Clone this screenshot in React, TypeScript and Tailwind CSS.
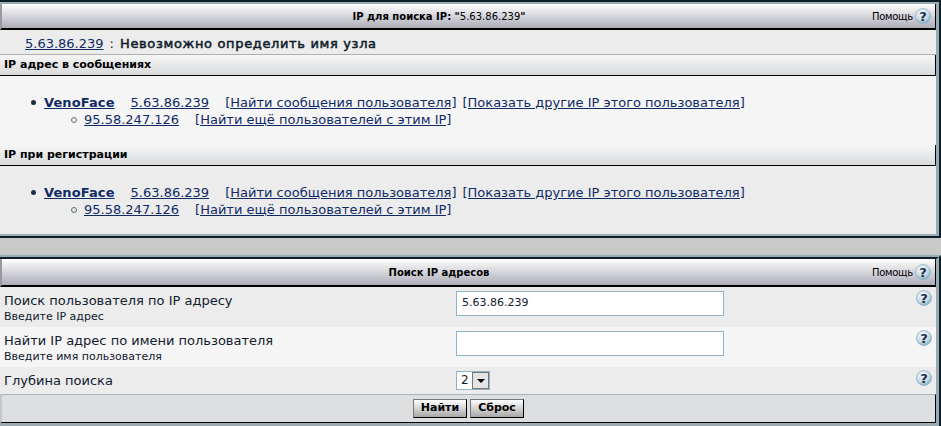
const HelpIcon = () => (
  <svg width="16" height="16" viewBox="0 0 16 16" className="shrink-0">
    <defs>
      <radialGradient id="hg" cx="0.4" cy="0.3" r="0.8">
        <stop offset="0" stopColor="#f4f8fa" />
        <stop offset="0.55" stopColor="#c9dde6" />
        <stop offset="1" stopColor="#6ea2b6" />
      </radialGradient>
    </defs>
    <circle cx="8" cy="8" r="7.5" fill="url(#hg)" stroke="#8fb3c2" strokeWidth="0.8" />
    <text x="8" y="13" textAnchor="middle" fontSize="13" fontWeight="700" fill="#1f2d48" fontFamily="'DejaVu Sans', sans-serif">?</text>
  </svg>
);

const Link = ({ children, bold }: { children: React.ReactNode; bold?: boolean }) => (
  <a className={`underline text-[#102a66] ${bold ? "font-bold tracking-[0.1px]" : ""}`}>{children}</a>
);

const TitleBar = ({ children, h }: { children: React.ReactNode; h: string }) => (
  <div className={`flex ${h} items-center border-b-2 border-l-2 border-r border-b-black border-l-[#9a9a9a] border-r-black bg-gradient-to-b from-[#ffffff] to-[#adadb9] text-[10px] text-black`}>
    <div className="ml-[4px] flex-1 text-center">{children}</div>
    <div className="flex items-center gap-[4px] pr-[4px]">
      <span className="w-[39px] tracking-[-0.3px]">Помощь</span>
      <HelpIcon />
    </div>
  </div>
);

const SectionHead = ({ children }: { children: React.ReactNode }) => (
  <div className="flex h-[21px] items-center border-b border-r border-b-black border-r-black bg-gradient-to-b from-[#f6f6f6] to-[#d8dadc] pl-[4px] pt-[1px] text-[11px] font-bold text-black">
    {children}
  </div>
);

const Entry = () => (
  <div className="text-[13px] leading-[17px]">
    <div className="flex items-center pl-[31px]">
      <span className="mr-[8px] h-[5px] w-[5px] rounded-full bg-[#1d2f44]" />
      <Link bold>VenoFace</Link>
      <span className="w-[16px]" />
      <Link>5.63.86.239</Link>
      <span className="w-[16px]" />
      <Link>[Найти сообщения пользователя]</Link>
      <span className="w-[6px]" />
      <Link>[Показать другие IP этого пользователя]</Link>
    </div>
    <div className="flex items-center pl-[71px]">
      <span className="mr-[7px] h-[6px] w-[6px] rounded-full border border-[#55707a]" />
      <Link>95.58.247.126</Link>
      <span className="w-[16px]" />
      <Link>[Найти ещё пользователей с этим IP]</Link>
    </div>
  </div>
);

const FormRow = ({ label, sub, bg, h, children }: { label: string; sub?: string; bg: string; h: string; children: React.ReactNode }) => (
  <div className={`flex ${h} ${bg} text-[#10202e]`}>
    <div className="w-[456px] pl-[4px] pt-[6px]">
      <div className="text-[13px] leading-[16px]">{label}</div>
      {sub && <div className="mt-[1px] text-[11px] leading-[14px]">{sub}</div>}
    </div>
    <div className="flex-1 pt-[4px]">{children}</div>
    <div className="pr-[4px] pt-[3px]"><HelpIcon /></div>
  </div>
);

const Btn = ({ children }: { children: React.ReactNode }) => (
  <div className="flex h-[19px] w-[54px] items-center justify-center border border-black border-t-[#777] border-l-[#777] bg-gradient-to-b from-white to-[#a8a8a8] text-[11px] font-bold text-black">
    {children}
  </div>
);

export default function App() {
  return (
    <div className="h-[426px] w-[941px] overflow-hidden bg-[#c9c9c9] font-['DejaVu_Sans',sans-serif]">
      <div className="border-b-2 border-r-2 border-t-2 border-[#0b1f2c]">
        <div className="border-b-2 border-r-[3px] border-t-2 border-[#9cabb1] bg-[#ececec]">
          <TitleBar h="h-[26px]">
            <b>IP для поиска IP: "</b>5.63.86.239<b>"</b>
          </TitleBar>
          <div className="flex h-[25px] items-center border-b border-[#b0b0b0] pl-[25px] pt-[3px] text-[13px] text-[#10202e]">
            <Link>5.63.86.239</Link>
            <span className="ml-[6px] mr-[6px]">:</span>
            <span className="tracking-[0.65px] [-webkit-text-stroke:0.5px_#0c1a28]">Невозможно определить имя узла</span>
          </div>
          <SectionHead>IP адрес в сообщениях</SectionHead>
          <div className="h-[69px] bg-[#f5f5f5] pt-[18px]"><Entry /></div>
          <SectionHead>IP при регистрации</SectionHead>
          <div className="h-[68px] bg-[#ececec] pt-[18px]"><Entry /></div>
        </div>
      </div>
      <div className="h-[17px]" />
      <div className="border-r-2 border-t-2 border-r-[#0b1f2c] border-t-[#9cabb1]">
        <div className="border-b-[3px] border-r-[3px] border-t-2 border-b-[#9cabb1] border-r-[#9cabb1] border-t-[#0b1f2c] bg-[#ececec]">
          <TitleBar h="h-[28px]"><b>Поиск IP адресов</b></TitleBar>
          <FormRow label="Поиск пользователя по IP адресу" sub="Введите IP адрес" bg="bg-[#ececec]" h="h-[40px]">
            <div className="flex h-[25px] w-[268px] items-center border border-[#8fb3c8] bg-white pl-[5px] text-[11px] text-[#10202e]">5.63.86.239</div>
          </FormRow>
          <FormRow label="Найти IP адрес по имени пользователя" sub="Введите имя пользователя" bg="bg-[#f5f5f5]" h="h-[40px]">
            <div className="h-[25px] w-[268px] border border-[#8fb3c8] bg-white" />
          </FormRow>
          <FormRow label="Глубина поиска" bg="bg-[#ececec]" h="h-[27px]">
            <div className="flex h-[19px] w-[34px] border border-[#8fb3c8] bg-white text-[12px]">
              <span className="flex-1 pl-[4px] leading-[17px]">2</span>
              <span className="flex w-[17px] items-center justify-center border border-[#777] bg-[#e4e4e4]">
                <span className="h-0 w-0 border-l-[4px] border-r-[4px] border-t-[4px] border-l-transparent border-r-transparent border-t-black" />
              </span>
            </div>
          </FormRow>
          <div className="flex h-[29px] items-center justify-center gap-[3px] border-b border-l-2 border-r border-t border-b-black border-l-[#c4c8cc] border-r-black border-t-[#a8b6bc] bg-[#dcdee0]">
            <Btn>Найти</Btn>
            <Btn>Сброс</Btn>
          </div>
        </div>
      </div>
    </div>
  );
}
